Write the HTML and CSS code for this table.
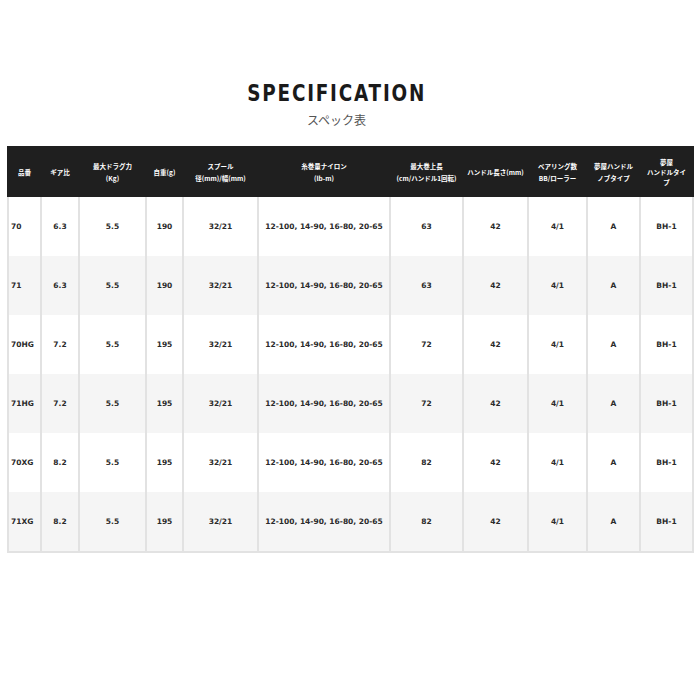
FILE: index.html
```html
<!DOCTYPE html>
<html lang="ja">
<head>
<meta charset="utf-8">
<link rel="stylesheet" href="styles.css">
</head>
<body>
<div class="page">
  <div class="heading">
    <h1 class="title"><span class="title-text">SPECIFICATION</span></h1>
    <p class="subtitle">スペック表</p>
  </div>
  <table class="spec">
    <colgroup>
      <col class="c1"><col class="c2"><col class="c3"><col class="c4"><col class="c5"><col class="c6"><col class="c7"><col class="c8"><col class="c9"><col class="c10"><col class="c11">
    </colgroup>
    <thead>
      <tr>
        <th>品番</th>
        <th>ギア比</th>
        <th>最大ドラグ力<br>(Kg)</th>
        <th>自重(g)</th>
        <th>スプール<br>径(mm)/幅(mm)</th>
        <th>糸巻量ナイロン<br>(lb-m)</th>
        <th>最大巻上長<br>(cm/ハンドル1回転)</th>
        <th>ハンドル長さ(mm)</th>
        <th>ベアリング数<br>BB/ローラー</th>
        <th>夢屋ハンドル<br>ノブタイプ</th>
        <th class="three">夢屋<br>ハンドルタイ<br>プ</th>
      </tr>
    </thead>
    <tbody>
      <tr><td class="name">70</td><td>6.3</td><td>5.5</td><td>190</td><td>32/21</td><td>12-100, 14-90, 16-80, 20-65</td><td>63</td><td>42</td><td>4/1</td><td>A</td><td>BH-1</td></tr>
      <tr><td class="name">71</td><td>6.3</td><td>5.5</td><td>190</td><td>32/21</td><td>12-100, 14-90, 16-80, 20-65</td><td>63</td><td>42</td><td>4/1</td><td>A</td><td>BH-1</td></tr>
      <tr><td class="name">70HG</td><td>7.2</td><td>5.5</td><td>195</td><td>32/21</td><td>12-100, 14-90, 16-80, 20-65</td><td>72</td><td>42</td><td>4/1</td><td>A</td><td>BH-1</td></tr>
      <tr><td class="name">71HG</td><td>7.2</td><td>5.5</td><td>195</td><td>32/21</td><td>12-100, 14-90, 16-80, 20-65</td><td>72</td><td>42</td><td>4/1</td><td>A</td><td>BH-1</td></tr>
      <tr><td class="name">70XG</td><td>8.2</td><td>5.5</td><td>195</td><td>32/21</td><td>12-100, 14-90, 16-80, 20-65</td><td>82</td><td>42</td><td>4/1</td><td>A</td><td>BH-1</td></tr>
      <tr><td class="name">71XG</td><td>8.2</td><td>5.5</td><td>195</td><td>32/21</td><td>12-100, 14-90, 16-80, 20-65</td><td>82</td><td>42</td><td>4/1</td><td>A</td><td>BH-1</td></tr>
    </tbody>
  </table>
</div>
</body>
</html>
```

FILE: styles.css
```css
html, body {
  margin: 0;
  padding: 0;
  background: #ffffff;
}
.page {
  padding: 78px 8px 0 7px;
  font-family: "DejaVu Sans", "Noto Sans CJK JP", sans-serif;
}
.heading {
  padding-right: 26px;
}
.title {
  margin: 0;
  text-align: center;
  font-family: "DejaVu Sans", sans-serif;
  font-weight: bold;
  font-size: 23px;
  line-height: 30px;
  color: #1a1a1a;
}
.title-text {
  display: inline-block;
  letter-spacing: 2.2px;
  transform: scaleX(0.8);
  transform-origin: center;
}
.subtitle {
  margin: 4px 0 0;
  text-align: center;
  font-family: "Noto Sans CJK JP", sans-serif;
  font-size: 12px;
  line-height: 16px;
  color: #555555;
}
.spec {
  margin-top: 18px;
  width: 685px;
  table-layout: fixed;
  border-collapse: collapse;
}
.c1 { width: 33px; }
.c2 { width: 38px; }
.c3 { width: 67px; }
.c4 { width: 37px; }
.c5 { width: 75px; }
.c6 { width: 132px; }
.c7 { width: 73px; }
.c8 { width: 65px; }
.c9 { width: 59px; }
.c10 { width: 53px; }
.c11 { width: 53px; }
.spec th {
  background: #1f1f1f;
  color: #ffffff;
  font-family: "Noto Sans CJK JP", sans-serif;
  font-weight: bold;
  font-size: 6.5px;
  line-height: 12px;
  height: 47px;
  padding: 0;
  text-align: center;
  vertical-align: middle;
  border: 2px solid #1f1f1f;
}
.spec th.three {
  line-height: 10px;
}
.spec td {
  height: 59px;
  padding: 0;
  text-align: center;
  vertical-align: middle;
  font-family: "DejaVu Sans", sans-serif;
  font-weight: bold;
  font-size: 7.5px;
  color: #2a2a2a;
  border: 2px solid #e2e2e2;
  border-top: none;
  border-bottom: none;
}
.spec tbody tr:nth-child(even) td {
  background: #f5f5f5;
}
.spec tbody tr:last-child td {
  border-bottom: 2px solid #e2e2e2;
}
.spec td.name {
  text-align: left;
  padding-left: 2px;
}
```
